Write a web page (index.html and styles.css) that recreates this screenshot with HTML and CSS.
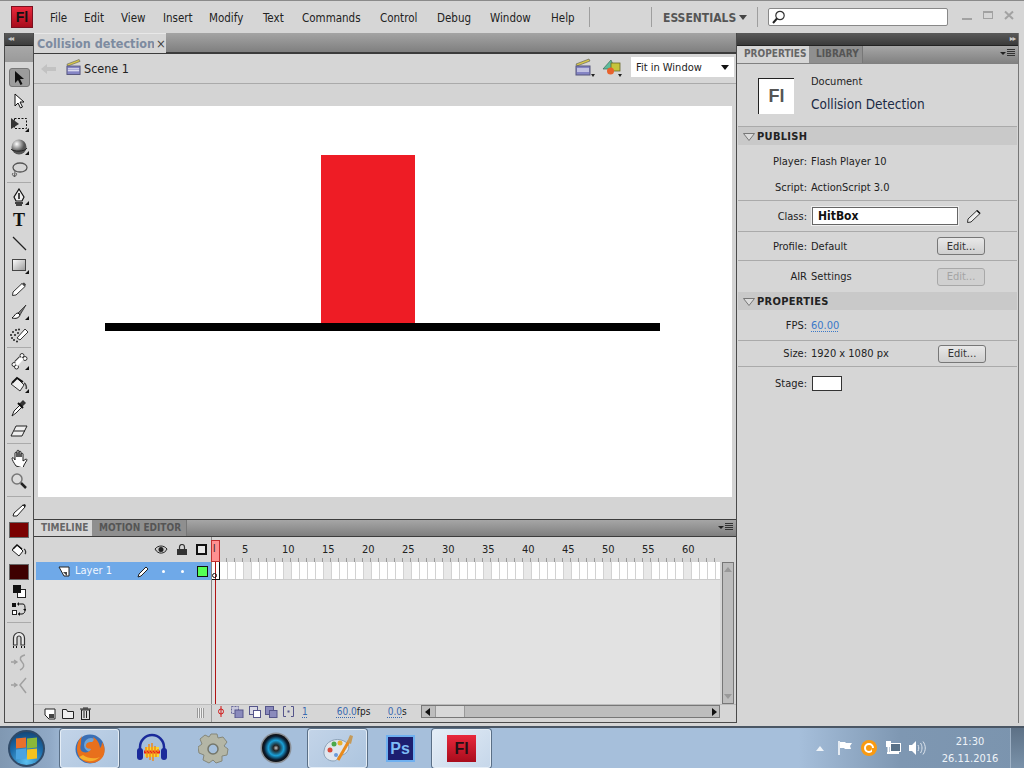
FILE: index.html
```html
<!DOCTYPE html>
<html lang="en">
<head>
<meta charset="utf-8">
<title>Collision detection</title>
<link rel="stylesheet" href="styles.css">
</head>
<body>
<div class="app">
  <div class="window">
    <header class="titlebar">
      <div class="fl-logo"><span>Fl</span></div>
      <nav class="menu">
        <span class="m-file">File</span><span class="m-edit">Edit</span><span class="m-view">View</span><span class="m-insert">Insert</span><span class="m-modify">Modify</span><span class="m-text">Text</span><span class="m-commands">Commands</span><span class="m-control">Control</span><span class="m-debug">Debug</span><span class="m-window">Window</span><span class="m-help">Help</span>
      </nav>
      <i class="vsep sep-a"></i>
      <i class="vsep sep-b"></i>
      <span class="essentials">ESSENTIALS</span>
      <i class="down-arrow"></i>
      <i class="vsep sep-c"></i>
      <div class="search">
        <svg width="16" height="16" viewBox="0 0 16 16"><circle cx="9" cy="6.5" r="4.2" fill="#fff" stroke="#333" stroke-width="1.2"/><path d="M6 9.5 2 14" stroke="#222" stroke-width="2"/></svg>
      </div>
      <div class="winctl">
        <svg width="11" height="11" viewBox="0 0 11 11"><rect x="0" y="8" width="10" height="2" fill="#a2a2a2"/></svg>
        <svg width="11" height="11" viewBox="0 0 11 11"><rect x="0.5" y="1.5" width="9" height="7" fill="none" stroke="#a2a2a2"/><rect x="0" y="1" width="10" height="2" fill="#a2a2a2"/></svg>
        <svg width="11" height="11" viewBox="0 0 11 11"><path d="M1 1.5 9 9M9 1.5 1 9" stroke="#a2a2a2" stroke-width="2"/></svg>
      </div>
    </header>

    <div class="workspace">
      <aside class="tools">
        <div class="tools-head"><span class="collapse">◂◂</span></div>
        <div class="tools-grip"></div>
        <div class="tool-list">
          <div class="tool"><div class="tool-selected"><svg width="14" height="16" viewBox="0 0 14 16"><path d="M3 1v12l3-3 2.500 5 2-1-2.500-5h4z" fill="#111"/></svg></div></div>
          <div class="tool"><svg width="14" height="16" viewBox="0 0 14 16"><path d="M3 1v12l3-3 2.500 5 2-1-2.500-5h4z" fill="#fff" stroke="#111"/></svg></div>
          <div class="tool corner"><svg width="18" height="16" viewBox="0 0 18 16"><rect x="4.500" y="2.500" width="12" height="10" fill="none" stroke="#111" stroke-dasharray="2 1.500"/><path d="M1 2 9 8 1 13z" fill="#333"/></svg></div>
          <div class="tool corner"><svg width="18" height="18" viewBox="0 0 18 18"><defs><radialGradient id="ball" cx=".35" cy=".3"><stop offset="0" stop-color="#fff"/><stop offset="1" stop-color="#555"/></radialGradient></defs><circle cx="9" cy="9" r="7.500" fill="url(#ball)"/><path d="M1 11c2 3 14 3 16-1" fill="none" stroke="#222"/></svg></div>
          <div class="tool"><svg width="18" height="18" viewBox="0 0 18 18"><ellipse cx="10" cy="6.500" rx="7" ry="4.500" fill="none" stroke="#555" stroke-width="1.300"/><path d="M5 10 4.500 16M3 12a2 2 0 1 0 3 0" fill="none" stroke="#555"/></svg></div>
          <div class="tool-sep"></div>
          <div class="tool corner"><svg width="14" height="18" viewBox="0 0 14 18"><path d="M7 1 12 9 10 13H4L2 9z" fill="#eee" stroke="#111" stroke-width="1.200"/><path d="M7 5v6M3 15h8M4 17h6" stroke="#111" stroke-width="1.500"/></svg></div>
          <div class="tool"><span class="t-glyph">T</span></div>
          <div class="tool"><svg width="16" height="16" viewBox="0 0 16 16"><path d="M2 2 15 15" stroke="#222" stroke-width="1.300"/></svg></div>
          <div class="tool corner"><svg width="15" height="13" viewBox="0 0 15 13"><defs><linearGradient id="rct" x1="0" y1="0" x2="1" y2="1"><stop offset="0" stop-color="#fff"/><stop offset="1" stop-color="#999"/></linearGradient></defs><rect x=".5" y=".5" width="13" height="11" fill="url(#rct)" stroke="#444"/></svg></div>
          <div class="tool"><svg width="16" height="16" viewBox="0 0 16 16"><path d="M1.500 14.500 2 11 11 2.500l3 3L5 14z" fill="#fff" stroke="#333"/><path d="M11 2.500l3 3 1-2-2-2z" fill="#444"/></svg></div>
          <div class="tool corner"><svg width="18" height="16" viewBox="0 0 18 16"><path d="M16 1 8 9l2 2z" fill="#777" stroke="#222" stroke-width=".7"/><path d="M8 9c-3 0-3 3-6 5 4 1 7 0 8-3z" fill="#fff" stroke="#111"/></svg></div>
          <div class="tool"><svg width="20" height="16" viewBox="0 0 20 16"><path d="M8 11 16 2l3 3-8 8z" fill="#fff" stroke="#333"/><g fill="#222"><circle cx="2" cy="8" r="1"/><circle cx="4" cy="5" r="1"/><circle cx="7" cy="3" r="1"/><circle cx="10" cy="2.500" r="1"/><circle cx="3" cy="11" r="1"/><circle cx="5" cy="13" r="1"/><circle cx="8" cy="14.500" r="1"/><circle cx="6" cy="8" r="1"/><circle cx="9" cy="6" r="1"/></g></svg></div>
          <div class="tool-sep"></div>
          <div class="tool corner"><svg width="17" height="17" viewBox="0 0 17 17"><path d="M5 10 10 5" stroke="#333" stroke-width="5"/><path d="M5 10 10 5" stroke="#fff" stroke-width="3"/><circle cx="11" cy="2.500" r="2" fill="#fff" stroke="#333"/><circle cx="14" cy="5.500" r="2" fill="#fff" stroke="#333"/><circle cx="3" cy="11.500" r="2" fill="#fff" stroke="#333"/><circle cx="5.500" cy="14" r="2" fill="#fff" stroke="#333"/><path d="M4 10.500 10.500 4l2 2.500L6.500 13z" fill="#fff"/></svg></div>
          <div class="tool corner"><svg width="18" height="17" viewBox="0 0 18 17"><path d="M1 8 7 2l7 7-4 6z" fill="#f0f0f0" stroke="#333"/><path d="M2 7 7 2 13 6" fill="none" stroke="#111" stroke-width="1.800"/><path d="M14 7c2 1 3 4 2 6" stroke="#444" stroke-width="1.500" fill="none"/></svg></div>
          <div class="tool"><svg width="16" height="18" viewBox="0 0 16 18"><path d="M1 17 3 12 9 6l2 2-6 6z" fill="#fff" stroke="#222"/><path d="M8 5 11 8 15 4 12 1z" fill="#333"/><path d="M7 4l5 5" stroke="#111" stroke-width="2"/></svg></div>
          <div class="tool"><svg width="18" height="12" viewBox="0 0 18 12"><path d="M6 1h11l-5 10H1z" fill="#eee" stroke="#222"/><path d="M4 6h11" stroke="#222"/></svg></div>
          <div class="tool-sep"></div>
          <div class="tool"><svg width="17" height="18" viewBox="0 0 17 18"><path d="M5 17C3 14 1 11 1 9c1-1 2 0 3 2V4c0-1 2-1 2 0v4-6c0-1 2-1 2 0v6-5c0-1 2-1 2 0v5-3c0-1 2-1 2 0v7l3-2c1 0 1 1 1 1l-3 5-1 3z" fill="#fff" stroke="#222"/></svg></div>
          <div class="tool"><svg width="18" height="18" viewBox="0 0 18 18"><circle cx="7" cy="7" r="5" fill="#ddd" stroke="#777" stroke-width="1.500"/><path d="M11 11l5 5" stroke="#222" stroke-width="2.500"/></svg></div>
          <div class="tool-sep wide"></div>
          <div class="tool h-22"><svg width="15" height="14" viewBox="0 0 15 14"><path d="M1 13l1-3 9-8 2 2-8 9z" fill="#fff" stroke="#222"/><path d="M10 2l3-1 1 2-1 1z" fill="#222"/></svg></div>
          <div class="tool h-17"><div class="swatch"></div></div>
          <div class="tool h-25"><svg width="16" height="15" viewBox="0 0 16 15"><path d="M1 7 6 2l6 6-4 5z" fill="#fff" stroke="#222"/><path d="M2 6l4-4 5 4" fill="none" stroke="#111" stroke-width="1.600"/><path d="M13 6c2 1 2 4 1 5" stroke="#333" fill="none" stroke-width="1.300"/></svg></div>
          <div class="tool h-17"><div class="swatch deep"></div></div>
          <div class="tool h-21"><svg width="14" height="14" viewBox="0 0 14 14"><rect x="5.500" y="5.500" width="8" height="8" fill="#fff" stroke="#222"/><rect x="1" y="1" width="8" height="8" fill="#111"/></svg></div>
          <div class="tool h-16"><svg width="14" height="14" viewBox="0 0 14 14"><rect y="1" width="4" height="4" fill="#111"/><rect x=".5" y="8.500" width="4" height="4" fill="#fff" stroke="#222"/><path d="M7 2h4c2 0 2 3 2 5M6 12h4c2 0 3-2 3-4" fill="none" stroke="#111"/><path d="M7 0v4L5 2zM8 10v4l-2-2zM11 7h4l-2 2z" fill="#111"/></svg></div>
          <div class="tool-sep h-10"></div>
          <div class="tool h-24"><svg width="16" height="18" viewBox="0 0 16 18"><path d="M2.500 15V8a5.500 5.500 0 0 1 11 0v7h-3.500V8a2 2 0 0 0-4 0v7z" fill="#e8e8e8" stroke="#333" stroke-width="1.200"/><path d="M2 17h1M5 17h1M10 17h1M13 17h1" stroke="#111" stroke-width="2"/></svg></div>
          <div class="tool"><svg width="18" height="17" viewBox="0 0 18 17"><path d="M1 8h6M4 6l3 2-3 2" stroke="#a0a0a0" fill="none" stroke-width="1.300"/><path d="M15 1C10 2 9 5 12 8s2 6-2 8" stroke="#a0a0a0" fill="none" stroke-width="1.500"/></svg></div>
          <div class="tool"><svg width="18" height="17" viewBox="0 0 18 17"><path d="M1 8h6M4 6l3 2-3 2" stroke="#a0a0a0" fill="none" stroke-width="1.300"/><path d="M16 1 10 8l6 8" stroke="#a0a0a0" fill="none" stroke-width="1.500"/></svg></div>
        </div>
      </aside>

      <main class="center">
        <div class="doc-tabs"><div class="doc-tab"><span class="doc-name">Collision detection</span><span class="doc-close">×</span></div></div>

        <div class="editbar">
          <svg class="back" width="16" height="12" viewBox="0 0 16 12"><path d="M0 6 6 1v3h9v4H6v3z" fill="#c2c2c2"/></svg>
          <svg class="clap" width="15" height="18" viewBox="0 0 16 18"><path d="M1 6 14 1l1 2L2 8z" fill="#d8c84a" stroke="#555" stroke-width=".6"/><rect x="1" y="8" width="14" height="9" fill="#8484c4" stroke="#56567c"/><path d="M2 11h12M2 13h12" stroke="#fff"/></svg>
          <span class="scene">Scene 1</span>
          <div class="edit-right">
            <span class="drop"><svg width="16" height="18" viewBox="0 0 16 18"><path d="M1 6 14 1l1 2L2 8z" fill="#d8c84a" stroke="#555" stroke-width=".6"/><rect x="1" y="8" width="14" height="9" fill="#8484c4" stroke="#56567c"/><path d="M2 11h12M2 13h12" stroke="#fff"/></svg></span>
            <span class="drop"><svg width="20" height="18" viewBox="0 0 20 18"><path d="M1 11 9 2l4 9z" fill="#5ebd9c" stroke="#3a6a5a" stroke-width=".7"/><rect x="9" y="5" width="9" height="8" fill="#c4c43c" stroke="#66662a" stroke-width=".8"/><circle cx="8.500" cy="13" r="3.500" fill="#e8622c"/></svg></span>
            <div class="zoom-select"><span>Fit in Window</span><i class="down-arrow small"></i></div>
          </div>
        </div>

        <div class="pasteboard">
          <div class="stage">
            <div class="shape-red"></div>
            <div class="shape-floor"></div>
          </div>
        </div>

        <section class="timeline">
          <div class="tl-tabs">
            <div class="tl-tab active">TIMELINE</div>
            <div class="tl-tab">MOTION EDITOR</div>
            <div class="panel-menu"><i class="menu-arrow"></i><i class="menu-lines"></i></div>
          </div>
          <div class="tl-body">
            <div class="tl-left">
              <div class="tl-head">
                <svg width="14" height="10" viewBox="0 0 14 10"><path d="M1 4c3-4 9-4 12 0-2 5-9 6-12 0z" fill="#ccc" stroke="#222"/><circle cx="7" cy="4.500" r="2.500" fill="#222"/></svg>
                <svg width="10" height="11" viewBox="0 0 10 11"><path d="M2.500 5V3a2.500 2.500 0 0 1 5 0v2" fill="none" stroke="#333" stroke-width="1.200"/><rect y="5" width="10" height="6" fill="#333"/></svg>
                <i class="outline-box"></i>
              </div>
              <div class="layer">
                <svg class="layer-ico" width="12" height="11" viewBox="0 0 12 11"><path d="M1 1h10v9H6z" fill="#fff" stroke="#222"/><path d="M5 6h4v4z" fill="#444"/></svg>
                <span class="layer-name">Layer 1</span>
                <svg class="pencil" width="13" height="13" viewBox="0 0 13 13"><path d="M1 12l1-3 7-7 2 2-7 7z" fill="#fff" stroke="#222"/></svg>
                <i class="dot d1"></i><i class="dot d2"></i>
                <i class="layer-color"></i>
              </div>
              <div class="tl-left-fill"></div>
            </div>
            <div class="tl-right">
              <div class="ruler">
                <span>5</span><span>10</span><span>15</span><span>20</span><span>25</span><span>30</span><span>35</span><span>40</span><span>45</span><span>50</span><span>55</span><span>60</span>
              </div>
              <div class="frames-wrap">
                <div class="frames-col">
                  <div class="frames"></div>
                  <div class="frames-fill"></div>
                </div>
                <div class="vscroll"><i class="up"></i><div class="vtrack"></div><i class="dn"></i></div>
              </div>
            </div>
            <div class="playhead"><span>l</span></div>
            <div class="playline"></div>
            <div class="keyframe"><i></i></div>
          </div>
          <div class="tl-status">
            <div class="st-left">
              <svg width="12" height="12" viewBox="0 0 12 12"><path d="M1 1h10v10H5L1 7z" fill="#fff" stroke="#222"/><rect x="5" y="6" width="5" height="4" fill="#444"/></svg>
              <svg width="12" height="10" viewBox="0 0 12 10"><path d="M.5 9.500V.5h4l1 2h6v7z" fill="#eee" stroke="#222"/></svg>
              <svg width="11" height="13" viewBox="0 0 11 13"><rect x="1.500" y="3" width="8" height="9.500" fill="#ddd" stroke="#222"/><path d="M0 2h11M3 1h5M4 4v7M6.500 4v7" stroke="#222"/></svg>
              <i class="grip"></i>
            </div>
            <div class="st-right">
              <svg class="on1" width="8" height="11" viewBox="0 0 8 11"><path d="M4 0v11" stroke="#d01818"/><circle cx="4" cy="5.500" r="2.500" fill="none" stroke="#d01818"/></svg>
              <svg class="on2" width="13" height="12" viewBox="0 0 13 12"><rect x=".5" y=".5" width="7" height="7" fill="#c8c8dc" stroke="#6a6a9a" stroke-dasharray="2 1"/><rect x="4" y="4" width="8" height="8" fill="#8a8abc" stroke="#55558a"/></svg>
              <svg class="on3" width="13" height="12" viewBox="0 0 13 12"><rect x=".5" y=".5" width="8" height="8" fill="#d8d8e4" stroke="#55558a"/><rect x="4.500" y="4.500" width="7" height="7" fill="#fff" stroke="#55558a"/></svg>
              <svg class="on4" width="13" height="12" viewBox="0 0 13 12"><rect x=".5" y=".5" width="8" height="8" fill="#8a8abc" stroke="#55558a"/><rect x="4.500" y="4.500" width="7.500" height="7" fill="#8a8abc" stroke="#55558a"/></svg>
              <svg class="on5" width="11" height="11" viewBox="0 0 11 11"><path d="M3 .5H.5v10H3M8 .5h2.500v10H8" fill="none" stroke="#55558a"/><rect x="4.500" y="4.500" width="2" height="2" fill="#55558a"/></svg>
              <span class="link st-frame">1</span>
              <span class="st-fps"><span class="link">60.0</span>fps</span>
              <span class="st-sec"><span class="link">0.0</span>s</span>
              <div class="hscroll">
                <i class="left"></i>
                <div class="hthumb"></div>
                <i class="right"></i>
              </div>
            </div>
          </div>
        </section>
      </main>

      <aside class="panel">
        <div class="panel-top"><span class="expand">▸▸</span></div>
        <div class="panel-tabs">
          <div class="pt-tab active">PROPERTIES</div>
          <div class="pt-tab">LIBRARY</div>
          <div class="panel-menu"><i class="menu-arrow"></i><i class="menu-lines"></i></div>
        </div>
        <div class="doc-info">
          <div class="fl-doc">Fl</div>
          <div class="doc-text">
            <div class="doc-kind">Document</div>
            <div class="doc-title">Collision Detection</div>
          </div>
        </div>
        <div class="sec-head"><svg class="tri" width="12" height="8" viewBox="0 0 12 8"><path d="M.5.5h11L6 7.500z" fill="#dcdcdc" stroke="#777"/></svg>PUBLISH</div>
        <div class="row r-29 first"><label>Player:</label><span>Flash Player 10</span></div>
        <div class="row r-27 line"><label>Script:</label><span>ActionScript 3.0</span></div>
        <div class="row r-31 line"><label>Class:</label><div class="class-input">HitBox</div>
          <svg class="class-pencil" width="16" height="16" viewBox="0 0 16 16"><path d="M1.500 14.500 2 11 11 2.500l3 3L5 14z" fill="#eee" stroke="#333"/><path d="M11 2.500l3 3" stroke="#111" stroke-width="1.500"/></svg></div>
        <div class="row r-29 line"><label>Profile:</label><span>Default</span><button class="btn">Edit...</button></div>
        <div class="row r-31"><label>AIR</label><span>Settings</span><button class="btn disabled">Edit...</button></div>
        <div class="sec-head"><svg class="tri" width="12" height="8" viewBox="0 0 12 8"><path d="M.5.5h11L6 7.500z" fill="#dcdcdc" stroke="#777"/></svg>PROPERTIES</div>
        <div class="row r-31 line"><label>FPS:</label><span class="link blue">60.00</span></div>
        <div class="row r-26 line"><label>Size:</label><span>1920 x 1080 px</span><button class="btn shift">Edit...</button></div>
        <div class="row r-33"><label>Stage:</label><i class="stage-swatch"></i></div>
      </aside>
    </div>
  </div>

  <footer class="taskbar">
    <div class="start"><div class="orb"><i class="q r"></i><i class="q g"></i><i class="q b"></i><i class="q y"></i></div></div>
    <div class="task on">
      <svg width="32" height="32" viewBox="0 0 32 32"><circle cx="16" cy="16" r="14.500" fill="#3a6fb5"/><circle cx="17" cy="12" r="7" fill="#6fa5d8"/><path d="M8 3C2 9 1 20 7 26c6 6 16 5 21-1 4-5 3-12 0-16 0 3-1 5-2 6 0-4-3-9-7-11 1 2 1 4-1 5-3 0-5 0-6 3-1 3 2 4 5 4-1 3-5 4-8 3-3-1-3-5-2-8 0-3 0-5 1-8z" fill="#e8701c"/><path d="M5 24c5 5 15 6 21 0-4 2-12 2-17-2z" fill="#f6b02c"/></svg>
    </div>
    <div class="task">
      <svg width="32" height="32" viewBox="0 0 32 32"><path d="M4 20V15a12 12 0 0 1 24 0v5" fill="none" stroke="#1a2a9a" stroke-width="2.500"/><rect x="1" y="16" width="6" height="12" rx="3" fill="#1a2a9a"/><rect x="25" y="16" width="6" height="12" rx="3" fill="#1a2a9a"/><path d="M9 20h14" stroke="#f9d72c" stroke-width="10"/><path d="M8 20h16" stroke="#e82020" stroke-width="3"/><path d="M10 20v-5M13 20v-8M16 20v-9M19 20v-6M22 20v-3M11 20v6M14 20v8M17 20v9M20 20v5" stroke="#f08a1c" stroke-width="1.500"/></svg>
    </div>
    <div class="task">
      <svg width="32" height="32" viewBox="0 0 32 32"><path d="M13 2h6l1 4 5-1 4 5-3 4 4 3-1 6-5 1v5l-6 2-3-3-4 3-6-3 1-5-5-2-1-6 4-3-2-5 5-4 4 2z" fill="#b4b6a6" stroke="#85877a"/><circle cx="15" cy="17" r="5" fill="#a6c0dc" stroke="#74766a" stroke-width="1.500"/></svg>
    </div>
    <div class="task">
      <svg width="32" height="32" viewBox="0 0 32 32"><defs><radialGradient id="lens"><stop offset="0" stop-color="#ccc"/><stop offset=".2" stop-color="#222"/><stop offset=".55" stop-color="#1aa0d8"/><stop offset=".85" stop-color="#0b1b2e"/><stop offset="1" stop-color="#111"/></radialGradient></defs><circle cx="16" cy="16" r="15.500" fill="#8a8f96"/><circle cx="16" cy="16" r="14" fill="url(#lens)"/></svg>
    </div>
    <div class="task on">
      <svg width="32" height="32" viewBox="0 0 32 32"><path d="M2 18C3 8 14 4 22 8c6 3 6 8 2 12-3 3-5 1-7 3-2 3-2 5-6 5-5 0-10-4-9-10z" fill="#dfe6ee" stroke="#8ca2b8"/><circle cx="8" cy="17" r="2.500" fill="#d84a3a"/><circle cx="12" cy="11" r="2.500" fill="#4aa84a"/><circle cx="18" cy="10" r="2.500" fill="#e8b030"/><circle cx="14" cy="22" r="2" fill="#6a9ad8"/><path d="M16 27 27 8" stroke="#e88a1c" stroke-width="3"/><path d="M25 9l3-7 3 1-2 8z" fill="#c49a5a"/></svg>
    </div>
    <div class="task"><div class="ps-ico">Ps</div></div>
    <div class="task on current"><div class="fl-task">Fl</div></div>
    <div class="tray">
      <i class="tray-arrow"></i>
      <svg class="flag" width="16" height="16" viewBox="0 0 16 16"><path d="M2 1v14" stroke="#fff" stroke-width="1.500"/><path d="M3 2h5l1 1h6l-2 3 1 3H8L7 8H3z" fill="#fff"/></svg>
      <svg class="agent" width="16" height="16" viewBox="0 0 16 16"><circle cx="8" cy="8" r="8" fill="#f99a12"/><circle cx="8" cy="8" r="4" fill="none" stroke="#fff" stroke-width="2"/><path d="M12 8v4" stroke="#f99a12" stroke-width="2"/></svg>
      <svg class="net" width="16" height="16" viewBox="0 0 16 16"><rect x="5.500" y="3.500" width="10" height="8" fill="#5a7288" stroke="#fff"/><path d="M2 13h12" stroke="#fff" stroke-width="2"/><rect x="1" y="1" width="5" height="6" fill="#fff"/><path d="M3.500 7v6" stroke="#fff" stroke-width="2"/></svg>
      <svg class="spk" width="18" height="16" viewBox="0 0 18 16"><path d="M1 5h3l4-4v14l-4-4H1z" fill="#fff"/><path d="M10 5c1 2 1 4 0 6M12.500 3c2 3 2 7 0 10M15 1.500c3 4 3 9 0 13" fill="none" stroke="#dfe6ee"/></svg>
      <div class="clock"><div>21:30</div><div>26.11.2016</div></div>
      <div class="show-desktop"></div>
    </div>
  </footer>
</div>
</body>
</html>
```
FILE: styles.css
```css
* { box-sizing: border-box; }
html, body { margin: 0; padding: 0; height: 100%; overflow: hidden; }
body {
  font-family: "DejaVu Sans", "Open Sans", sans-serif;
  font-stretch: condensed;
  font-size: 11px;
  color: #222;
}
i { display: block; font-style: normal; }
.app { width: 1024px; height: 768px; display: flex; flex-direction: column; }
.window { height: 726px; display: flex; flex-direction: column; background: #d6d6d6; border-top: 1px solid #8a8a8a; }

/* title bar */
.titlebar { height: 32px; flex: none; display: flex; align-items: center; position: relative; }
.fl-logo {
  width: 22px; height: 22px; margin: 0 0 0 11px; flex: none;
  background: linear-gradient(#e8283c, #a80c1c);
  border: 1px solid #7a1020;
  color: #111; font: bold 14px/20px "Liberation Sans", sans-serif; text-align: center;
}
.menu { display: flex; margin-left: 17px; font-size: 11.500px; color: #222; margin-top: 2px; width: 540px; flex: none; }
.menu span { flex: none; }
.m-file { width: 34px; } .m-edit { width: 37px; } .m-view { width: 42px; } .m-insert { width: 46px; }
.m-modify { width: 54px; } .m-text { width: 39px; } .m-commands { width: 78px; } .m-control { width: 57px; }
.m-debug { width: 53px; } .m-window { width: 61px; } .m-help { width: 30px; }
.vsep { width: 1px; height: 20px; background: #9e9e9e; flex: none; }
.sep-a { margin-left: -1px; }
.sep-b { margin-left: 61px; }
.essentials { font-size: 12px; font-weight: bold; color: #555; margin: 2px 0 0 11px; width: 76px; flex: none; white-space: nowrap; }
.down-arrow { width: 0; height: 0; border: 4px solid transparent; border-top: 5px solid #444; border-bottom: 0; flex: none; }
.sep-c { margin-left: 10px; }
.search { width: 180px; height: 18px; background: #fff; border: 1px solid #888; border-radius: 2px; margin: 0 0 0 10px; flex: none; padding-left: 2px; display: flex; align-items: center; }
.winctl { display: flex; gap: 10px; margin: -3px 0 0 14px; flex: none; }

/* workspace */
.workspace { height: 691px; display: flex; padding: 0 5px 0 4px; flex: none; }

/* tools */
.tools { width: 30px; flex: none; height: 690px; border-left: 1px solid #4a4a4a; border-right: 1px solid #4a4a4a; border-bottom: 1px solid #4a4a4a; background: #d6d6d6; display: flex; flex-direction: column; }
.tools-head { height: 13px; background: linear-gradient(#5a5a5a, #3c3c3c); color: #c4c4c4; font-size: 8px; line-height: 12px; padding-left: 3px; border-bottom: 1px solid #222; letter-spacing: -1px; flex: none; }
.collapse { letter-spacing: -1px; }
.tools-grip { height: 16px; background: linear-gradient(#a8a8a8, #9a9a9a); flex: none; }
.tool-list { display: flex; flex-direction: column; padding-top: 4px; }
.tool { height: 23px; display: flex; align-items: center; justify-content: center; position: relative; flex: none; }
.tool.corner::after { content: ""; position: absolute; right: 4px; bottom: 3px; border: 2px solid transparent; border-right-color: #111; border-bottom-color: #111; }
.tool-selected { width: 21px; height: 19px; border: 1px solid #777; border-radius: 3px; background: #9c9c9c; display: flex; align-items: center; justify-content: center; }
.tool-sep { height: 4px; flex: none; position: relative; }
.tool-sep::after { content: ""; position: absolute; left: 2px; right: 2px; top: 1px; height: 1px; background: #aaa; }
.tool-sep.wide { height: 7px; }
.tool-sep.wide::after { top: 4px; }
.tool-sep.h-10 { height: 10px; }
.tool-sep.h-10::after { top: 5px; }
.h-22 { height: 22px; } .h-17 { height: 17px; } .h-25 { height: 25px; } .h-21 { height: 21px; } .h-16 { height: 16px; } .h-24 { height: 24px; }
.t-glyph { font: bold 18px/1 "Liberation Serif", serif; color: #111; }
.swatch { width: 20px; height: 16px; background: #7a0000; border: 1px solid #666; }
.swatch.deep { background: #3e0000; }

/* center */
.center { width: 703px; flex: none; height: 690px; display: flex; flex-direction: column; border-right: 1px solid #4a4a4a; border-bottom: 1px solid #4a4a4a; }
.doc-tabs { height: 21px; flex: none; background: linear-gradient(#a4a4a4, #7f7f7f); border-bottom: 2px solid #3c3c3c; display: flex; }
.doc-tab { width: 132px; background: #d6d6d6; display: flex; align-items: center; padding-left: 3px; white-space: nowrap; height: 20px; border-top: 1px solid #e8e8e8; }
.doc-name { font-size: 12.500px; font-weight: bold; color: #7d8ba0; width: 117px; overflow: hidden; }
.doc-close { font-size: 13px; color: #444; margin-left: 2px; }
.editbar { height: 30px; flex: none; border-bottom: 1px solid #aaa; display: flex; align-items: center; padding-left: 7px; background: #d6d6d6; }
.back { margin-right: 9px; margin-top: 1px; }
.clap { margin-right: 3px; margin-top: -4px; }
.scene { font-size: 12.500px; color: #222; margin-top: -1px; }
.edit-right { margin-left: auto; display: flex; align-items: center; margin-top: -3px; }
.drop { display: block; position: relative; width: 27px; height: 18px; flex: none; }
.drop::after { content: ""; position: absolute; left: 16px; bottom: -1px; border: 2px solid transparent; border-top: 3px solid #222; border-bottom: 0; }
.drop svg { display: block; }
.zoom-select { width: 103px; height: 20px; background: #fff; display: flex; align-items: center; padding: 0 5px 0 5px; justify-content: space-between; margin-right: 2px; margin-left: 2px; font-size: 11px; color: #222; }
.down-arrow.small { margin: 0; border-top-color: #111; }
.pasteboard { flex: 1; padding: 22px 4px; background: #d4d4d4; display: flex; min-height: 0; }
.stage { flex: 1; background: #fff; position: relative; }
.shape-red { position: absolute; left: 283px; top: 49px; width: 94px; height: 168px; background: #ee1c25; }
.shape-floor { position: absolute; left: 67px; top: 217px; width: 555px; height: 8px; background: #000; }

/* timeline */
.timeline { height: 203px; flex: none; display: flex; flex-direction: column; background: #d6d6d6; }
.tl-tabs { height: 18px; flex: none; background: linear-gradient(#a6a6a6, #7f7f7f); border-top: 1px solid #3c3c3c; border-bottom: 1px solid #3c3c3c; display: flex; position: relative; }
.tl-tab { font-size: 10px; font-weight: bold; color: #555; padding: 0 7px; line-height: 16px; border-right: 1px solid #777; background: #8f8f8f; width: 95px; white-space: nowrap; height: 16px; }
.tl-tab.active { background: #d6d6d6; color: #666; width: 58px; border-right: 0; padding: 0 7px; }
.panel-menu { position: absolute; right: 3px; top: 3px; display: flex; align-items: center; gap: 1px; }
.menu-arrow { width: 0; height: 0; border: 3px solid transparent; border-top: 3px solid #222; border-bottom: 0; }
.menu-lines { width: 8px; height: 8px; background: repeating-linear-gradient(#333 0 1px, transparent 1px 2px); }
.tl-body { flex: 1; display: flex; position: relative; min-height: 0; }
.tl-left { width: 178px; flex: none; display: flex; flex-direction: column; border-right: 1px solid #888; }
.tl-head { height: 25px; flex: none; display: flex; align-items: center; justify-content: flex-end; gap: 9px; padding-right: 4px; }
.outline-box { width: 11px; height: 11px; border: 2px solid #111; background: #e8e8e8; }
.layer { height: 18px; margin-left: 2px; flex: none; background: #6fa9e8; display: flex; align-items: center; position: relative; color: #fff; white-space: nowrap; }
.layer-ico { margin-left: 22px; flex: none; }
.layer-name { margin-left: 5px; font-size: 11px; color: #f0f6ff; margin-top: -2px; width: 38px; flex: none; }
.pencil { margin-left: 24px; flex: none; }
.dot { width: 3px; height: 3px; border-radius: 50%; background: #fff; margin-left: 12px; flex: none; }
.d2 { margin-left: 16px; }
.layer-color { width: 11px; height: 11px; background: #55ff55; border: 1px solid #111; margin-left: 13px; flex: none; }
.tl-left-fill { flex: 1; background: #e2e2e2; }
.tl-right { flex: 1; display: flex; flex-direction: column; min-width: 0; }
.ruler {
  height: 25px; flex: none; display: flex; padding-left: 30px; line-height: 26px; font-size: 11px; color: #222;
  background: repeating-linear-gradient(90deg, transparent 0 6px, #999 6px 7px, transparent 7px 8px) left bottom / 100% 4px no-repeat;
  margin-right: 17px;
}
.ruler span { width: 40px; flex: none; }
.frames-wrap { flex: 1; display: flex; min-height: 0; padding-right: 2px; }
.frames-col { flex: 1; display: flex; flex-direction: column; min-width: 0; }
.frames {
  height: 18px; flex: none;
  border-bottom: 1px solid #ccc;
  background:
    repeating-linear-gradient(90deg, transparent 0 7px, #d2d2d2 7px 8px),
    repeating-linear-gradient(90deg, transparent 0 32px, #e8e8e8 32px 39px, transparent 39px 40px) #fff;
}
.frames-fill { flex: 1; background: #e2e2e2; }
.vscroll { width: 12px; flex: none; margin-left: 2px; background: #bdbdbd; border: 1px solid #777; display: flex; flex-direction: column; align-items: center; justify-content: space-between; padding: 4px 0; }
.vscroll .up { border: 4px solid transparent; border-bottom: 5px solid #999; border-top: 0; }
.vscroll .dn { border: 4px solid transparent; border-top: 5px solid #999; border-bottom: 0; }
.playhead { position: absolute; left: 177px; top: 3px; width: 9px; height: 22px; background: #ff9090; border: 1px solid #c03030; color: #222; font-size: 10px; line-height: 16px; padding-left: 1px; }
.playline { position: absolute; left: 181px; top: 25px; bottom: 0; width: 1px; background: #b01414; }
.keyframe { position: absolute; left: 178px; top: 25px; width: 8px; height: 18px; border: 1px solid #111; border-left: 0; border-top: 0; }
.keyframe i { position: absolute; left: 0; bottom: 1px; width: 5px; height: 5px; border-radius: 50%; border: 1px solid #111; }

.tl-status { height: 18px; flex: none; border-top: 1px solid #bbb; display: flex; }
.st-left { width: 178px; flex: none; display: flex; align-items: center; padding-left: 10px; gap: 6px; border-right: 1px solid #999; position: relative; }
.grip { position: absolute; right: 7px; top: 3px; width: 7px; height: 10px; background: repeating-linear-gradient(90deg, #999 0 1px, #f0f0f0 1px 2px); }
.st-right { flex: 1; display: flex; align-items: center; font-size: 10px; position: relative; min-width: 0; margin-top: -4px; }
.on1 { margin-left: 5px; } .on2 { margin-left: 6px; } .on3 { margin-left: 5px; } .on4 { margin-left: 3px; } .on5 { margin-left: 5px; }
.link { text-decoration: underline dotted #3a6ab0; color: #3a6ab0; text-underline-offset: 2px; }
.st-frame { margin-left: 8px; }
.st-fps { margin-left: 29px; width: 46px; white-space: nowrap; }
.st-sec { width: 30px; margin-left: 5px; white-space: nowrap; }
.hscroll { width: 299px; height: 13px; margin-left: 3px; border: 1px solid #777; background: #bdbdbd; display: flex; align-items: center; position: relative; flex: none; }
.hscroll .left { border: 4px solid transparent; border-right: 5px solid #111; border-left: 0; margin-left: 3px; }
.hthumb { width: 30px; height: 11px; background: #d8d8d8; border: 1px solid #999; border-width: 0 1px; margin-left: 5px; }
.hscroll .right { border: 4px solid transparent; border-left: 5px solid #111; border-right: 0; margin-left: auto; margin-right: 2px; }

/* panel */
.panel { width: 282px; flex: none; height: 690px; background: #d6d6d6; border-right: 1px solid #777; display: flex; flex-direction: column; }
.panel-top { height: 13px; flex: none; background: linear-gradient(#5a5a5a, #3a3a3a); border-bottom: 1px solid #222; color: #c8c8c8; font-size: 8px; line-height: 12px; text-align: right; padding-right: 3px; letter-spacing: -1px; }
.panel-tabs { height: 18px; flex: none; background: linear-gradient(#a6a6a6, #7f7f7f); display: flex; position: relative; }
.pt-tab { font-size: 10px; font-weight: bold; color: #555; background: #8f8f8f; padding: 0 7px; line-height: 16px; border-right: 1px solid #777; width: 54px; height: 17px; white-space: nowrap; }
.pt-tab.active { background: #d6d6d6; color: #666; width: 72px; border-right: 0; }
.doc-info { height: 63px; flex: none; display: flex; padding: 14px 0 0 20px; border-bottom: 1px solid #aaa; margin: 0 1px; }
.fl-doc { width: 36px; height: 36px; background: #fff; border-left: 1px solid #222; border-top: 1px solid #222; font: bold 18px/34px "Liberation Sans", sans-serif; color: #555; text-align: center; flex: none; }
.doc-text { margin-left: 17px; }
.doc-kind { font-size: 11px; line-height: 14px; margin-top: -3px; }
.doc-title { font-size: 13.500px; line-height: 16px; margin-top: 7px; color: #1a2a44; white-space: nowrap; }
.sec-head { height: 18px; flex: none; margin: 0 1px; background: #c9c9c9; font-size: 11px; font-weight: bold; color: #222; display: flex; align-items: center; padding-left: 5px; letter-spacing: .3px; }
.tri { margin-right: 2px; margin-left: 0; flex: none; margin-top: 2px; }
.row { display: flex; align-items: center; position: relative; flex: none; padding-right: 32px; margin: 0 1px; }
.row.line { border-bottom: 1px solid #aaa; }
.row.first { padding-top: 3px; }
.r-26 { height: 26px; } .r-27 { height: 27px; } .r-29 { height: 29px; } .r-31 { height: 31px; } .r-33 { height: 33px; }
.row label { width: 69px; text-align: right; margin-right: 4px; flex: none; }
.link.blue { color: #3a78c8; font-size: 11px; text-decoration-color: #3a78c8; }
.class-input { width: 146px; height: 18px; margin-left: 1px; background: #fff; border: 1px solid #666; font-size: 12px; font-weight: bold; color: #111; padding-left: 5px; line-height: 16px; box-shadow: 0 0 0 1px #eee; }
.class-pencil { margin-left: 8px; }
.btn { margin-left: auto; width: 48px; height: 18px; padding: 0; background: linear-gradient(#e8e8e8, #cfcfcf); border: 1px solid #777; border-radius: 3px; font: inherit; font-size: 11px; color: #333; }
.btn.disabled { color: #a4a4a4; border-color: #a8a8a8; background: #d0d0d0; }
.btn.shift { margin-right: -1px; }
.stage-swatch { width: 30px; height: 15px; background: #fff; border: 1px solid #333; margin-left: 1px; }

/* taskbar */
.taskbar { height: 42px; flex: none; border-top: 2px solid #4a5664; background: linear-gradient(90deg, #8098b2 0, #90a9c6 50px, #a6bfdb 70px, #a6bfdb 78%, #7e97b2 88%, #7b94ae 100%); display: flex; align-items: stretch; position: relative; }
.start { width: 60px; flex: none; display: flex; align-items: center; padding-left: 8px; }
.orb { width: 37px; height: 37px; border-radius: 50%; background: radial-gradient(circle at 50% 90%, #5cc0f0, #1b6aa8 55%, #123a66); border: 2px solid #2f4a68; display: grid; grid-template-columns: 10px 10px; grid-template-rows: 10px 10px; gap: 1px; place-content: center; }
.q { display: block; transform: skewY(-6deg); }
.q.r { background: #e8702c; } .q.g { background: #8ab83a; } .q.b { background: #4aa3e0; } .q.y { background: #f4c21f; }
.task { width: 60px; flex: none; margin-right: 2px; display: flex; align-items: center; justify-content: center; }
.task.on { background: linear-gradient(135deg, #c3d4e8, #adc5df); border: 1px solid #e4edf6; border-radius: 3px; box-shadow: 0 0 0 1px #5a6f86; margin: 1px 3px 0 0; width: 59px; }
.task.current { background: linear-gradient(135deg, #e4edf6, #c6d7ea); }
.ps-ico { width: 29px; height: 27px; background: #1d1f70; border: 2px solid #6fb0f0; color: #7fbdf6; font: bold 16px/23px "Liberation Sans", sans-serif; text-align: center; }
.fl-task { width: 29px; height: 27px; background: linear-gradient(#e8283c, #a80c1c); color: #221015; font: bold 16px/27px "Liberation Sans", sans-serif; text-align: center; }
.tray { margin-left: auto; display: flex; align-items: center; color: #f2f6fb; position: relative; height: 100%; }
.tray-arrow { border: 4px solid transparent; border-bottom: 5px solid #eef3f8; border-top: 0; margin-right: 13px; }
.flag { margin-right: 8px; } .agent { margin-right: 8px; } .net { margin-right: 7px; } .spk { margin-right: 8px; }
.clock { width: 72px; text-align: center; font-size: 11px; line-height: 17px; color: #eef3f8; flex: none; margin-top: 3px; margin-right: 4px; }
.show-desktop { width: 14px; height: 100%; background: linear-gradient(#5d7186, #7a92aa); border-left: 1px solid #9fb2c6; flex: none; }
```
